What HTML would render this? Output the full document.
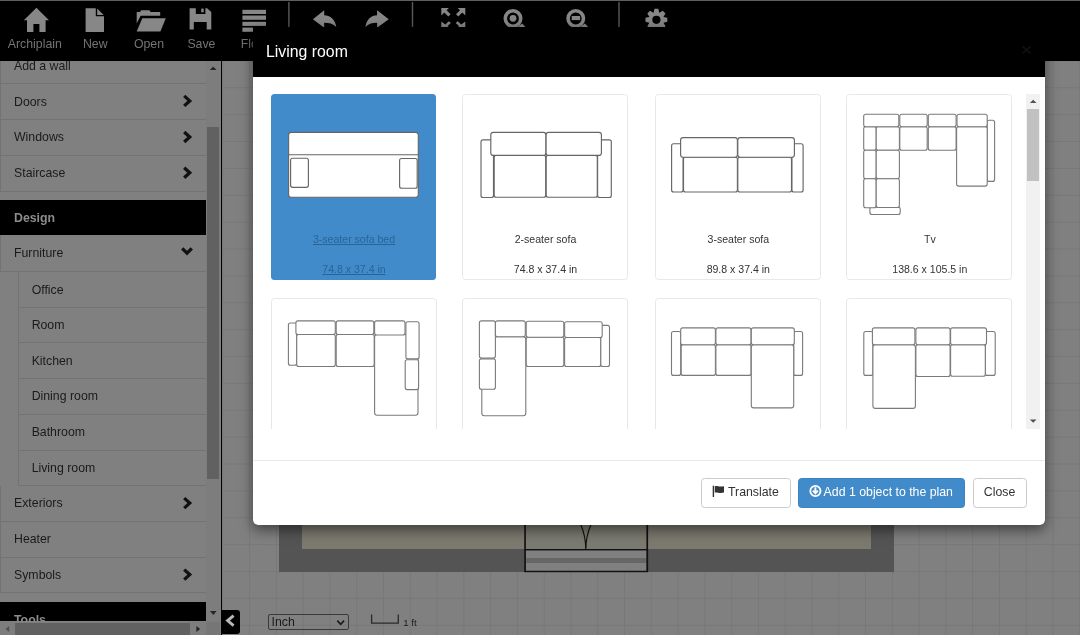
<!DOCTYPE html>
<html><head><meta charset="utf-8"><title>Archiplain</title>
<style>
html,body{margin:0;padding:0;width:1080px;height:635px;overflow:hidden;background:#808080}
body{filter:blur(0.35px);position:relative;font-family:"Liberation Sans",sans-serif}
.a{position:absolute}
.t{position:absolute;white-space:nowrap}
svg{overflow:visible}
</style></head><body>
<div class="a" style="left:222px;top:60.5px;width:858px;height:575px;background:#808080;background-image:linear-gradient(#787878 1px,transparent 1px),linear-gradient(90deg,#787878 1px,transparent 1px);background-size:26.79px 26.88px;background-position:0.32px 26.30px"></div>
<div class="a" style="left:279px;top:300px;width:614.6px;height:272px;background:#545454;"></div>
<div class="a" style="left:301.6px;top:300px;width:569.6px;height:249.0px;background:#7c7a6f;"></div>
<svg class="a" style="left:0;top:0" width="1080" height="635"><g fill="none" stroke="#111" stroke-width="1.2"><rect x="525" y="500" width="122.5" height="71.6" fill="#808080"/><rect x="525.6" y="558" width="121.3" height="5" fill="#666" stroke="none"/><line x1="524.7" y1="549.7" x2="647.5" y2="549.7"/><path d="M580,524 Q585.8,535 585.8,549.7 M591.7,524 Q585.8,535 585.8,549.7"/></g><rect x="525.6" y="500" width="121.3" height="49.2" fill="#7b7a70"/><g fill="none" stroke="#111" stroke-width="1.2"><line x1="525.2" y1="500" x2="525.2" y2="571.7"/><line x1="647" y1="500" x2="647" y2="571.7"/><line x1="524.7" y1="549.7" x2="647.5" y2="549.7"/><line x1="524.7" y1="571.3" x2="647.5" y2="571.3"/><path d="M580.5,524 Q585.8,536 585.8,549.7 M591.2,524 Q585.8,536 585.8,549.7"/></g></svg>
<div class="a" style="left:268px;top:614px;width:80.5px;height:16.2px;border:1px solid #3a3a3a;border-radius:2px;box-sizing:border-box"></div>
<div class="t" style="left:271.50px;top:612.93px;font-size:12.32px;line-height:18px;color:#1a1a1a;font-weight:normal;">Inch</div>
<svg class="a" style="left:0;top:0" width="1080" height="635"><path d="M337.3,620.6 L340.7,624.4 L344.1,620.6" fill="none" stroke="#1a1a1a" stroke-width="1.6"/><path d="M371.6,614.4 V623.2 H398.3 V614.4" fill="none" stroke="#2a2a2a" stroke-width="1.3"/></svg>
<div class="t" style="left:403.30px;top:614.64px;font-size:9.68px;line-height:15px;color:#1a1a1a;font-weight:normal;">1 ft</div>
<div class="a" style="left:222px;top:610.2px;width:17.8px;height:24px;background:#000;border-radius:0 3px 3px 0"></div>
<svg class="a" style="left:0;top:0" width="1080" height="635"><path d="M233.6,615.6 L227.6,620.6 L233.6,625.6" fill="none" stroke="#b8b8b8" stroke-width="2.9"/></svg>
<div class="a" style="left:0px;top:60.5px;width:206px;height:561px;background:#808080;"></div>
<div class="a" style="left:0px;top:82.8px;width:206px;height:1px;background:#737373;"></div><div class="a" style="left:0px;top:48.6px;width:1px;height:34.7px;background:#737373;"></div><div class="t" style="left:14.00px;top:57.08px;font-size:12.32px;line-height:18px;color:#1a1a1a;font-weight:normal;">Add a wall</div>
<div class="a" style="left:0px;top:119.0px;width:206px;height:1px;background:#737373;"></div><div class="a" style="left:0px;top:83.3px;width:1px;height:36.2px;background:#737373;"></div><div class="t" style="left:14.00px;top:92.53px;font-size:12.32px;line-height:18px;color:#1a1a1a;font-weight:normal;">Doors</div>
<div class="a" style="left:0px;top:154.7px;width:206px;height:1px;background:#737373;"></div><div class="a" style="left:0px;top:119.5px;width:1px;height:35.7px;background:#737373;"></div><div class="t" style="left:14.00px;top:128.48px;font-size:12.32px;line-height:18px;color:#1a1a1a;font-weight:normal;">Windows</div>
<div class="a" style="left:0px;top:190.7px;width:206px;height:1px;background:#737373;"></div><div class="a" style="left:0px;top:155.2px;width:1px;height:36.0px;background:#737373;"></div><div class="t" style="left:14.00px;top:164.33px;font-size:12.32px;line-height:18px;color:#1a1a1a;font-weight:normal;">Staircase</div>
<div class="a" style="left:0px;top:200px;width:206px;height:34.7px;background:#000;"></div>
<div class="t" style="left:14.00px;top:208.73px;font-size:12.32px;line-height:18px;color:#8c8c8c;font-weight:bold;">Design</div>
<div class="a" style="left:0px;top:271.1px;width:206px;height:1px;background:#737373;"></div><div class="a" style="left:0px;top:234.7px;width:1px;height:36.9px;background:#737373;"></div><div class="t" style="left:14.00px;top:244.28px;font-size:12.32px;line-height:18px;color:#1a1a1a;font-weight:normal;">Furniture</div>
<div class="a" style="left:18px;top:306.8px;width:188px;height:1px;background:#737373;"></div><div class="a" style="left:18px;top:271.6px;width:1px;height:35.7px;background:#737373;"></div><div class="t" style="left:31.64px;top:280.58px;font-size:12.32px;line-height:18px;color:#1a1a1a;font-weight:normal;">Office</div>
<div class="a" style="left:18px;top:342.1px;width:188px;height:1px;background:#737373;"></div><div class="a" style="left:18px;top:307.3px;width:1px;height:35.3px;background:#737373;"></div><div class="t" style="left:31.64px;top:316.08px;font-size:12.32px;line-height:18px;color:#1a1a1a;font-weight:normal;">Room</div>
<div class="a" style="left:18px;top:377.7px;width:188px;height:1px;background:#737373;"></div><div class="a" style="left:18px;top:342.6px;width:1px;height:35.6px;background:#737373;"></div><div class="t" style="left:31.64px;top:351.53px;font-size:12.32px;line-height:18px;color:#1a1a1a;font-weight:normal;">Kitchen</div>
<div class="a" style="left:18px;top:413.8px;width:188px;height:1px;background:#737373;"></div><div class="a" style="left:18px;top:378.2px;width:1px;height:36.1px;background:#737373;"></div><div class="t" style="left:31.64px;top:387.38px;font-size:12.32px;line-height:18px;color:#1a1a1a;font-weight:normal;">Dining room</div>
<div class="a" style="left:18px;top:449.9px;width:188px;height:1px;background:#737373;"></div><div class="a" style="left:18px;top:414.3px;width:1px;height:36.1px;background:#737373;"></div><div class="t" style="left:31.64px;top:423.48px;font-size:12.32px;line-height:18px;color:#1a1a1a;font-weight:normal;">Bathroom</div>
<div class="a" style="left:18px;top:485.0px;width:188px;height:1px;background:#737373;"></div><div class="a" style="left:18px;top:450.4px;width:1px;height:35.1px;background:#737373;"></div><div class="t" style="left:31.64px;top:459.08px;font-size:12.32px;line-height:18px;color:#1a1a1a;font-weight:normal;">Living room</div>
<div class="a" style="left:0px;top:520.7px;width:206px;height:1px;background:#737373;"></div><div class="a" style="left:0px;top:485.5px;width:1px;height:35.7px;background:#737373;"></div><div class="t" style="left:14.00px;top:494.48px;font-size:12.32px;line-height:18px;color:#1a1a1a;font-weight:normal;">Exteriors</div>
<div class="a" style="left:0px;top:556.6px;width:206px;height:1px;background:#737373;"></div><div class="a" style="left:0px;top:521.2px;width:1px;height:35.9px;background:#737373;"></div><div class="t" style="left:14.00px;top:530.28px;font-size:12.32px;line-height:18px;color:#1a1a1a;font-weight:normal;">Heater</div>
<div class="a" style="left:0px;top:592.4px;width:206px;height:1px;background:#737373;"></div><div class="a" style="left:0px;top:557.1px;width:1px;height:35.8px;background:#737373;"></div><div class="t" style="left:14.00px;top:566.13px;font-size:12.32px;line-height:18px;color:#1a1a1a;font-weight:normal;">Symbols</div>
<div class="a" style="left:0px;top:601.5px;width:206px;height:19.8px;background:#000;"></div>
<div class="t" style="left:14.00px;top:611.03px;font-size:12.32px;line-height:18px;color:#8c8c8c;font-weight:bold;">Tools</div>
<svg class="a" style="left:0;top:0" width="1080" height="635"><g fill="none" stroke="#111" stroke-width="3.3" stroke-linecap="butt" stroke-linejoin="miter"><path d="M184.2,95.9 L189.7,100.9 L184.2,105.9"/><path d="M184.2,132.0 L189.7,137.0 L184.2,142.0"/><path d="M184.2,167.8 L189.7,172.8 L184.2,177.8"/><path d="M184.2,498.1 L189.7,503.1 L184.2,508.1"/><path d="M184.2,569.6 L189.7,574.6 L184.2,579.6"/><path d="M182.2,248.3 L187,253.1 L191.8,248.3"/></g></svg>
<div class="a" style="left:0px;top:621.6px;width:206px;height:13.4px;background:#7d7d7d;"></div>
<div class="a" style="left:15px;top:622.9px;width:175.1px;height:12.1px;background:#616161;"></div>
<div class="a" style="left:206px;top:60.5px;width:14.2px;height:561.1px;background:#7d7d7d;"></div>
<div class="a" style="left:207.3px;top:127.3px;width:11.7px;height:351.4px;background:#616161;"></div>
<div class="a" style="left:206px;top:621.6px;width:14.2px;height:13.4px;background:#767676;"></div>
<svg class="a" style="left:0;top:0" width="1080" height="635"><g fill="#262626"><path d="M209.8,70 L213.2,66.6 L216.6,70 Z"/><path d="M210,611.1 L213.3,614.9 L216.6,611.1 Z"/><path fill="#505050" d="M5.6,629 L9.2,625.9 L9.2,632.1 Z"/><path d="M196.4,625.9 L200.2,629 L196.4,632.1 Z"/></g></svg>
<div class="a" style="left:220.8px;top:60.5px;width:1.5px;height:575px;background:#000;"></div>
<div class="a" style="left:0px;top:0px;width:1080px;height:60.6px;background:#000;border-top:1px solid #5f5f5f;box-sizing:border-box"></div>
<svg class="a" style="left:0;top:0" width="1080" height="61"><g fill="#878787"><path d="M36.4,7.8 L49,20.2 L45.6,20.2 V32 H39.4 V24 H33.4 V32 H27 V20.2 H23.8 Z"/><path d="M85.6,8.3 H95.8 V16.2 H104 V32 H85.6 Z"/><path d="M97.2,8.6 L103.7,15.1 H97.2 Z"/><path d="M136.7,11.9 H140 L141.2,10.3 H149.4 L150.6,11.9 H160.2 V15.8 H140.6 L136.7,23.4 Z"/><path d="M142.3,18.2 H165.8 L160.4,31.6 H136.7 Z"/><path d="M189.6,8.2 H195.8 V14 H205.4 V8.2 H207.1 L211.3,11.9 V29.4 H206.7 V21.9 H193.8 V29.4 H189.6 Z"/><rect x="201.2" y="8.6" width="2.5" height="3.7"/><rect x="242.4" y="9.8" width="23.6" height="4.2"/><rect x="242.4" y="15.5" width="23.6" height="4.3"/><rect x="242.4" y="21.8" width="23.6" height="4.1"/><rect x="242.4" y="27.6" width="10.6" height="4.2"/><path d="M312.9,19.25 L324.2,10.25 V15.2 C330.2,15.2 335.2,19.5 336.3,26.9 C333,23.6 329,22.7 324.2,22.7 V27.75 Z"/><path d="M388.75,19.25 L377.1,10.25 V15.2 C371.1,15.2 366.5,19.5 365.4,26.9 C368.7,23.6 372.5,22.7 377.1,22.7 V27.75 Z"/><path transform="" d="M441.3,8 H448.9 L446.6,10.3 L450.6,14.3 L448.3,16.6 L444.3,12.6 L441.3,15.6 Z"/><path transform="translate(906.6,0) scale(-1,1)" d="M441.3,8 H448.9 L446.6,10.3 L450.6,14.3 L448.3,16.6 L444.3,12.6 L441.3,15.6 Z"/><path transform="" d="M441.3,28 H449.6 L447.6,26 L450.9,22.9 L448.9,21.2 L445.3,24.4 L441.3,21.5 Z"/><path transform="translate(906.6,0) scale(-1,1)" d="M441.3,28 H449.6 L447.6,26 L450.9,22.9 L448.9,21.2 L445.3,24.4 L441.3,21.5 Z"/><circle cx="513" cy="18.5" r="7.7" fill="none" stroke="#878787" stroke-width="3.6"/><path d="M518.1,26.4 L522.2,23.6 L526,27.8 L525.6,28.1 L519.3,28.1 Z"/><circle cx="513" cy="18.3" r="3.4"/><circle cx="575.75" cy="18.5" r="7.7" fill="none" stroke="#878787" stroke-width="3.6"/><path d="M580.9,26.4 L585,23.6 L588.8,27.8 L588.4,28.1 L582.1,28.1 Z"/><rect x="571.7" y="16" width="8.4" height="4.1"/></g><g fill="#5a5a5a"><rect x="288.2" y="2" width="1.4" height="26"/><rect x="411.8" y="2" width="1.4" height="26"/><rect x="618.3" y="2" width="1.4" height="26"/></g></svg>
<svg class="a" style="left:0;top:0" width="1080" height="61"><defs><clipPath id="cc"><rect x="640" y="0" width="40" height="28.3"/></clipPath></defs><path clip-path="url(#cc)" fill="#878787" fill-rule="evenodd" d="M653.52,12.66 L654.47,8.87 L658.33,8.87 L659.28,12.66 L659.41,12.71 L662.77,10.71 L665.49,13.43 L663.49,16.79 L663.54,16.92 L667.33,17.87 L667.33,21.73 L663.54,22.68 L663.49,22.81 L665.49,26.17 L662.77,28.89 L659.41,26.89 L659.28,26.94 L658.33,30.73 L654.47,30.73 L653.52,26.94 L653.39,26.89 L650.03,28.89 L647.31,26.17 L649.31,22.81 L649.26,22.68 L645.47,21.73 L645.47,17.87 L649.26,16.92 L649.31,16.79 L647.31,13.43 L650.03,10.71 L653.39,12.71 Z M660.5,19.8 A4.1,4.1 0 1,0 652.3,19.8 A4.1,4.1 0 1,0 660.5,19.8 Z"/></svg>
<div class="t" style="left:7.80px;top:34.63px;font-size:12.32px;line-height:18px;color:#747474;font-weight:normal;">Archiplain</div>
<div class="t" style="left:82.90px;top:34.63px;font-size:12.32px;line-height:18px;color:#747474;font-weight:normal;">New</div>
<div class="t" style="left:133.90px;top:34.63px;font-size:12.32px;line-height:18px;color:#747474;font-weight:normal;">Open</div>
<div class="t" style="left:187.40px;top:34.63px;font-size:12.32px;line-height:18px;color:#747474;font-weight:normal;">Save</div>
<div class="t" style="left:240.80px;top:34.63px;font-size:12.32px;line-height:18px;color:#747474;font-weight:normal;">Floor</div>
<div class="a" style="left:253px;top:27px;width:792px;height:498px;background:#000;border-radius:5px;box-shadow:0 4.4px 13.2px rgba(0,0,0,.5);overflow:hidden"><div class="a" style="left:0;top:50px;width:792px;height:448px;background:#fff"></div></div>
<div class="t" style="left:266.00px;top:39.71px;font-size:15.84px;line-height:24px;color:#fff;font-weight:normal;">Living room</div>
<svg class="a" style="left:0;top:0" width="1080" height="635"><path d="M1022.5,46.3 L1030.5,53.3 M1030.5,46.3 L1022.5,53.3" stroke="#111" stroke-width="1.6"/></svg>
<div class="a" style="left:253px;top:459.6px;width:792px;height:1px;background:#e9e9e9;"></div>
<div class="a" style="left:701px;top:478.0px;width:89.5px;height:30px;box-sizing:border-box;border:1px solid #ccc;border-radius:3.5px;background:#fff"></div>
<svg class="a" style="left:0;top:0" width="1080" height="635"><rect x="712.7" y="485.7" width="1.4" height="11.3" fill="#333"/><path d="M714.8,486.2 C717,485.4 719,487.2 724,486.2 V492.6 C719,493.6 717,491.8 714.8,492.6 Z" fill="#333"/></svg>
<div class="t" style="left:728.00px;top:483.23px;font-size:12.32px;line-height:18px;color:#333;font-weight:normal;">Translate</div>
<div class="a" style="left:798px;top:478.0px;width:167px;height:30px;box-sizing:border-box;border:1px solid #3a84c4;border-radius:3.5px;background:#428bca"></div>
<svg class="a" style="left:0;top:0" width="1080" height="635"><circle cx="815.4" cy="491.0" r="5.1" fill="none" stroke="#fff" stroke-width="1.8"/><path d="M815.4,487.2 V493.1 M812.9,490.7 L815.4,493.3 L817.9,490.7" fill="none" stroke="#fff" stroke-width="1.9"/></svg>
<div class="t" style="left:823.60px;top:483.23px;font-size:12.32px;line-height:18px;color:#fff;font-weight:normal;">Add 1 object to the plan</div>
<div class="a" style="left:973px;top:478.0px;width:54px;height:30px;box-sizing:border-box;border:1px solid #ccc;border-radius:3.5px;background:#fff"></div>
<div class="t" style="left:983.80px;top:483.23px;font-size:12.32px;line-height:18px;color:#333;font-weight:normal;">Close</div>
<div class="a" style="left:0;top:94.2px;width:1080px;height:334.7px;overflow:hidden"><div class="a" style="left:0;top:-94.2px;width:1080px;height:635px"><div class="a" style="left:270.9px;top:94.2px;width:165.3px;height:186.3px;background:#428bca;border-radius:3.5px"></div><div class="a" style="left:462.1px;top:94.2px;width:166px;height:186.3px;box-sizing:border-box;border:1px solid #e8e8e8;border-radius:3.5px;background:#fff"></div><div class="a" style="left:654.9px;top:94.2px;width:166px;height:186.3px;box-sizing:border-box;border:1px solid #e8e8e8;border-radius:3.5px;background:#fff"></div><div class="a" style="left:846.4px;top:94.2px;width:166px;height:186.3px;box-sizing:border-box;border:1px solid #e8e8e8;border-radius:3.5px;background:#fff"></div><div class="a" style="left:270.9px;top:298.0px;width:166px;height:186.3px;box-sizing:border-box;border:1px solid #e8e8e8;border-radius:3.5px;background:#fff"></div><div class="a" style="left:462.1px;top:298.0px;width:166px;height:186.3px;box-sizing:border-box;border:1px solid #e8e8e8;border-radius:3.5px;background:#fff"></div><div class="a" style="left:654.9px;top:298.0px;width:166px;height:186.3px;box-sizing:border-box;border:1px solid #e8e8e8;border-radius:3.5px;background:#fff"></div><div class="a" style="left:846.4px;top:298.0px;width:166px;height:186.3px;box-sizing:border-box;border:1px solid #e8e8e8;border-radius:3.5px;background:#fff"></div><div class="t" style="left:274.00px;width:160px;text-align:center;top:230.84px;font-size:10.56px;line-height:16px;color:#2a6496;text-decoration:underline">3-seater sofa bed</div><div class="t" style="left:274.00px;width:160px;text-align:center;top:260.84px;font-size:10.56px;line-height:16px;color:#2a6496;text-decoration:underline">74.8 x 37.4 in</div><div class="t" style="left:465.50px;width:160px;text-align:center;top:231.04px;font-size:10.56px;line-height:16px;color:#333;">2-seater sofa</div><div class="t" style="left:465.50px;width:160px;text-align:center;top:260.94px;font-size:10.56px;line-height:16px;color:#333;">74.8 x 37.4 in</div><div class="t" style="left:658.30px;width:160px;text-align:center;top:231.04px;font-size:10.56px;line-height:16px;color:#333;">3-seater sofa</div><div class="t" style="left:658.30px;width:160px;text-align:center;top:260.94px;font-size:10.56px;line-height:16px;color:#333;">89.8 x 37.4 in</div><div class="t" style="left:849.80px;width:160px;text-align:center;top:231.04px;font-size:10.56px;line-height:16px;color:#333;">Tv</div><div class="t" style="left:849.80px;width:160px;text-align:center;top:260.94px;font-size:10.56px;line-height:16px;color:#333;">138.6 x 105.5 in</div><svg class="a" style="left:0;top:0" width="1080" height="635"><g fill="#fff" stroke="#666" stroke-width="1.15"><rect x="288.6" y="132.4" width="129.7" height="64.9" rx="2.5"/><line x1="288.6" y1="154.7" x2="418.3" y2="154.7"/><rect x="290.6" y="158.2" width="17.8" height="29.1" rx="2"/><rect x="399.6" y="158.5" width="17.6" height="29.7" rx="2"/><rect x="481.0" y="139.8" width="12.5" height="57.7" rx="2"/><rect x="597.6" y="139.8" width="13.7" height="57.7" rx="2"/><rect x="494.2" y="155.4" width="51.5" height="41.8" rx="2"/><rect x="546.2" y="155.4" width="51.1" height="41.8" rx="2"/><rect x="490.8" y="132.3" width="55.1" height="23.1" rx="2.5"/><rect x="546.1" y="132.3" width="55.3" height="23.1" rx="2.5"/><rect x="671.6" y="143.7" width="11.5" height="48.3" rx="2"/><rect x="791.9" y="143.7" width="11.2" height="48.3" rx="2"/><rect x="683.5" y="157.2" width="53.9" height="34.8" rx="2"/><rect x="737.8" y="157.2" width="53.7" height="34.8" rx="2"/><rect x="680.6" y="137.6" width="56.8" height="19.6" rx="2.5"/><rect x="737.8" y="137.6" width="56.6" height="19.6" rx="2.5"/></g><g fill="#fff" stroke="#7a7a7a" stroke-width="1.1"><rect x="869.9" y="207.0" width="30.3" height="7.5" rx="2"/><rect x="987.2" y="120.3" width="7.4" height="61.1" rx="2"/><rect x="863.7" y="126.7" width="12.5" height="23.6" rx="2"/><rect x="863.7" y="150.3" width="12.5" height="28.4" rx="2"/><rect x="863.7" y="178.7" width="12.5" height="29.1" rx="2"/><rect x="876.2" y="126.7" width="23.2" height="23.6" rx="2"/><rect x="876.2" y="150.3" width="23.2" height="28.4" rx="2"/><rect x="876.2" y="178.7" width="23.2" height="28.8" rx="2"/><rect x="899.8" y="126.7" width="27.4" height="23.6" rx="2"/><rect x="928.3" y="126.7" width="27.8" height="23.6" rx="2"/><rect x="956.6" y="126.7" width="30.6" height="59.4" rx="2"/><rect x="863.7" y="114.3" width="35.1" height="12.4" rx="2"/><rect x="899.8" y="114.3" width="27.4" height="12.4" rx="2"/><rect x="928.3" y="114.3" width="27.8" height="12.4" rx="2"/><rect x="957.0" y="114.3" width="30.2" height="12.4" rx="2"/><rect x="288.4" y="323.0" width="8.3" height="42.3" rx="2"/><rect x="296.7" y="334.5" width="38.6" height="32.0" rx="2"/><rect x="336.2" y="334.5" width="38.0" height="32.0" rx="2"/><rect x="374.6" y="334.5" width="43.4" height="80.8" rx="2.5"/><rect x="405.9" y="321.8" width="13.2" height="37.1" rx="2"/><rect x="405.2" y="359.8" width="13.4" height="29.8" rx="2"/><rect x="295.9" y="320.9" width="39.4" height="13.6" rx="2"/><rect x="336.2" y="320.9" width="37.6" height="13.6" rx="2"/><rect x="374.6" y="320.9" width="30.4" height="14.1" rx="2"/><rect x="481.8" y="336.8" width="44.0" height="79.0" rx="2.5"/><rect x="479.4" y="320.9" width="16.0" height="37.1" rx="2"/><rect x="479.4" y="358.9" width="16.0" height="30.4" rx="2"/><rect x="526.2" y="337.2" width="37.6" height="29.3" rx="2"/><rect x="564.6" y="337.5" width="36.2" height="29.0" rx="2"/><rect x="600.8" y="325.4" width="8.7" height="41.1" rx="2"/><rect x="495.4" y="320.9" width="29.9" height="15.9" rx="2"/><rect x="526.2" y="321.2" width="37.6" height="16.0" rx="2"/><rect x="564.6" y="321.8" width="37.6" height="15.7" rx="2"/><rect x="671.5" y="331.5" width="9.2" height="43.9" rx="2"/><rect x="793.7" y="331.5" width="8.9" height="43.9" rx="2"/><rect x="681.2" y="344.8" width="34.2" height="30.6" rx="2"/><rect x="715.9" y="344.8" width="35.1" height="30.6" rx="2"/><rect x="751.3" y="344.8" width="42.4" height="63.1" rx="2.5"/><rect x="680.7" y="327.9" width="34.7" height="16.9" rx="2"/><rect x="715.9" y="327.9" width="35.1" height="16.9" rx="2"/><rect x="751.3" y="327.9" width="43.0" height="16.9" rx="2"/><rect x="863.8" y="331.5" width="9.1" height="43.9" rx="2"/><rect x="985.3" y="331.5" width="9.9" height="43.9" rx="2"/><rect x="872.9" y="344.8" width="42.5" height="63.6" rx="2.5"/><rect x="915.9" y="344.8" width="34.2" height="31.7" rx="2"/><rect x="950.6" y="344.8" width="34.7" height="31.4" rx="2"/><rect x="872.4" y="327.9" width="42.5" height="16.9" rx="2"/><rect x="915.9" y="327.9" width="34.2" height="16.9" rx="2"/><rect x="950.6" y="327.9" width="35.9" height="16.9" rx="2"/></g></svg><div class="a" style="left:1026.3px;top:94.3px;width:13.9px;height:334.6px;background:#f1f1f1;"></div><div class="a" style="left:1027.4px;top:109px;width:11.7px;height:72px;background:#c1c1c1;"></div><svg class="a" style="left:0;top:0" width="1080" height="635"><g fill="#505050"><path d="M1029.9,103 L1033.2,99.7 L1036.5,103 Z"/><path d="M1029.9,419.4 L1033.2,422.7 L1036.5,419.4 Z"/></g></svg></div></div>
</body></html>
